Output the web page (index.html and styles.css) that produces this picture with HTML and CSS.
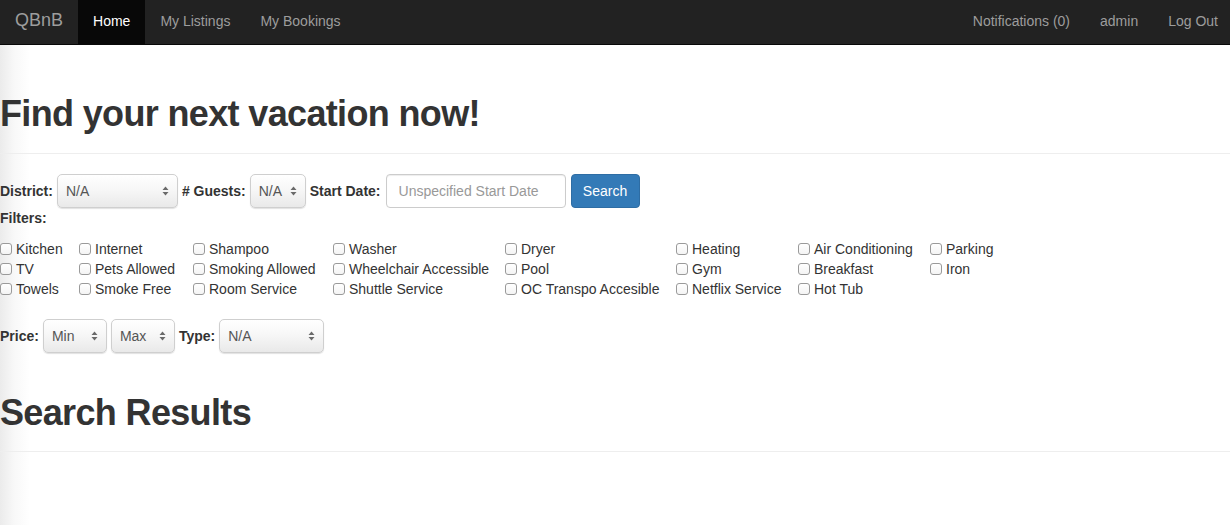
FILE: index.html
```html
<!DOCTYPE html>
<html>
<head>
<meta charset="utf-8">
<title>QBnB</title>
<link rel="stylesheet" href="styles.css">
</head>
<body>
<nav class="navbar">
  <div class="nav-left">
    <a class="brand" href="#">QBnB</a>
    <a class="nav-link active" href="#">Home</a>
    <a class="nav-link" href="#">My Listings</a>
    <a class="nav-link" href="#">My Bookings</a>
  </div>
  <div class="nav-right">
    <a class="nav-link" href="#">Notifications (0)</a>
    <a class="nav-link" href="#">admin</a>
    <a class="nav-link last" href="#">Log Out</a>
  </div>
</nav>

<main class="content">
  <div class="page-header">
    <h1>Find your next vacation now!</h1>
  </div>

  <form class="search-form">
    <div class="form-row">
      <label class="lbl">District:</label>
      <span class="sel w-district"><select><option>N/A</option></select><svg class="arr" width="7" height="10" viewBox="0 0 7 10"><path d="M3.5 0.5 L6.5 4 L0.5 4 Z M0.5 6 L6.5 6 L3.5 9.5 Z" fill="#6a6a6a"/></svg></span>
      <label class="lbl">#&nbsp;Guests:</label>
      <span class="sel w-guests"><select><option>N/A</option></select><svg class="arr" width="7" height="10" viewBox="0 0 7 10"><path d="M3.5 0.5 L6.5 4 L0.5 4 Z M0.5 6 L6.5 6 L3.5 9.5 Z" fill="#6a6a6a"/></svg></span>
      <label class="lbl">Start Date:</label>
      <input class="text-input" type="text" placeholder="Unspecified Start Date">
      <button class="btn-primary" type="button">Search</button>
    </div>

    <div class="lbl filters-lbl">Filters:</div>

    <div class="filters">
      <label class="cb"><input type="checkbox">Kitchen</label>
      <label class="cb"><input type="checkbox">Internet</label>
      <label class="cb"><input type="checkbox">Shampoo</label>
      <label class="cb"><input type="checkbox">Washer</label>
      <label class="cb"><input type="checkbox">Dryer</label>
      <label class="cb"><input type="checkbox">Heating</label>
      <label class="cb"><input type="checkbox">Air Conditioning</label>
      <label class="cb"><input type="checkbox">Parking</label>

      <label class="cb"><input type="checkbox">TV</label>
      <label class="cb"><input type="checkbox">Pets Allowed</label>
      <label class="cb"><input type="checkbox">Smoking Allowed</label>
      <label class="cb"><input type="checkbox">Wheelchair Accessible</label>
      <label class="cb"><input type="checkbox">Pool</label>
      <label class="cb"><input type="checkbox">Gym</label>
      <label class="cb"><input type="checkbox">Breakfast</label>
      <label class="cb"><input type="checkbox">Iron</label>

      <label class="cb"><input type="checkbox">Towels</label>
      <label class="cb"><input type="checkbox">Smoke Free</label>
      <label class="cb"><input type="checkbox">Room Service</label>
      <label class="cb"><input type="checkbox">Shuttle Service</label>
      <label class="cb"><input type="checkbox">OC Transpo Accesible</label>
      <label class="cb"><input type="checkbox">Netflix Service</label>
      <label class="cb"><input type="checkbox">Hot Tub</label>
      <span></span>
    </div>

    <div class="form-row price-row">
      <label class="lbl">Price:</label>
      <span class="sel w-price"><select><option>Min</option></select><svg class="arr" width="7" height="10" viewBox="0 0 7 10"><path d="M3.5 0.5 L6.5 4 L0.5 4 Z M0.5 6 L6.5 6 L3.5 9.5 Z" fill="#6a6a6a"/></svg></span>
      <span class="sel w-price"><select><option>Max</option></select><svg class="arr" width="7" height="10" viewBox="0 0 7 10"><path d="M3.5 0.5 L6.5 4 L0.5 4 Z M0.5 6 L6.5 6 L3.5 9.5 Z" fill="#6a6a6a"/></svg></span>
      <label class="lbl">Type:</label>
      <span class="sel w-type"><select><option>N/A</option></select><svg class="arr" width="7" height="10" viewBox="0 0 7 10"><path d="M3.5 0.5 L6.5 4 L0.5 4 Z M0.5 6 L6.5 6 L3.5 9.5 Z" fill="#6a6a6a"/></svg></span>
    </div>
  </form>

  <div class="page-header results-header">
    <h1>Search Results</h1>
  </div>
</main>
</body>
</html>
```

FILE: styles.css
```css
* { box-sizing: border-box; }

html, body {
  margin: 0;
  padding: 0;
  height: 100%;
}

body {
  font-family: "Liberation Sans", Arial, Helvetica, sans-serif;
  font-size: 14px;
  line-height: 20px;
  color: #333;
  background: linear-gradient(to right, #ebebeb 0, #f8f8f8 14px, #fff 30px);
}

.navbar {
  display: flex;
  justify-content: space-between;
  height: 45px;
  background: #222;
  border-bottom: 1px solid #080808;
}

.nav-left, .nav-right {
  display: flex;
}

.brand, .nav-link {
  display: block;
  text-decoration: none;
  color: #9d9d9d;
  padding: 11px 15px 13px;
  line-height: 20px;
  height: 44px;
}

.nav-link.last {
  padding-right: 12px;
}

.brand {
  font-size: 18px;
  padding-top: 10px;
}

.nav-link.active {
  background: #080808;
  color: #fff;
}

.content {
  padding: 0;
}

.page-header {
  margin: 49px 0 20px;
  padding-bottom: 9px;
  border-bottom: 1px solid #eee;
}

.page-header h1 {
  margin: 0 0 10px;
  font-size: 36px;
  font-weight: bold;
  letter-spacing: -0.65px;
  line-height: 1.1;
  color: #333;
}

.results-header {
  margin-top: 40px;
}

.form-row {
  display: flex;
  align-items: center;
  gap: 4px;
  height: 34px;
}

.lbl {
  font-weight: bold;
  white-space: nowrap;
}

.sel {
  position: relative;
  display: block;
  height: 34px;
}

.sel select {
  appearance: none;
  -webkit-appearance: none;
  width: 100%;
  height: 34px;
  margin: 0;
  padding: 0 8px;
  font-family: inherit;
  font-size: 14px;
  color: #555;
  border: 1px solid #cfcfcf;
  border-radius: 5px;
  background: linear-gradient(#ffffff 0, #f7f7f7 45%, #e9e9e9 100%);
  box-shadow: 0 1px 1px rgba(0, 0, 0, 0.12);
}

.sel .arr {
  position: absolute;
  right: 9px;
  top: 12px;
  pointer-events: none;
}

.w-district { width: 121px; }
.w-guests { width: 56px; }
.w-price { width: 64px; }
.w-type { width: 105px; }

.text-input {
  width: 180px;
  height: 34px;
  margin: 0 0 0 1px;
  padding: 6px 12px;
  font-family: inherit;
  font-size: 14px;
  color: #555;
  border: 1px solid #ccc;
  border-radius: 4px;
  box-shadow: inset 0 1px 1px rgba(0, 0, 0, 0.075);
  background: #fff;
}

.text-input::placeholder {
  color: #999;
}

.btn-primary {
  width: 69px;
  height: 34px;
  margin: 0 0 0 1px;
  padding: 6px 0;
  font-family: inherit;
  font-size: 14px;
  color: #fff;
  background: #337ab7;
  border: 1px solid #2e6da4;
  border-radius: 4px;
}

.filters {
  display: grid;
  grid-template-columns: 79px 114px 140px 172px 171px 122px 132px auto;
  justify-content: start;
  margin-top: 11px;
}

.cb {
  display: flex;
  align-items: center;
  white-space: nowrap;
  height: 20px;
  font-weight: normal;
}

.cb input {
  appearance: none;
  -webkit-appearance: none;
  width: 12px;
  height: 12px;
  margin: 1px 4px 0 0;
  border: 1px solid #9a9a9a;
  border-radius: 3px;
  background: linear-gradient(#fff, #f4f4f4);
  flex: none;
}

.price-row {
  margin-top: 20px;
}
```
